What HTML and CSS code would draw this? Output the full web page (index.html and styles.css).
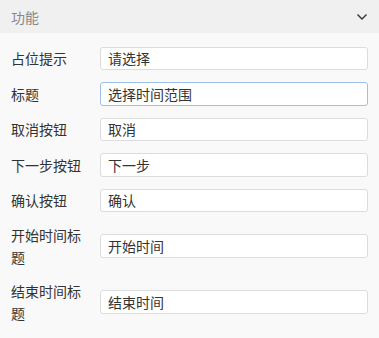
FILE: index.html
```html
<!DOCTYPE html>
<html lang="zh-CN">
<head>
<meta charset="utf-8">
<link rel="stylesheet" href="styles.css">
</head>
<body>
<div class="panel">
  <div class="panel-header">
    <span class="panel-title">功能</span>
    <svg class="chevron" width="12" height="8" viewBox="0 0 12 8"><path d="M1.5 1.5 L6 6 L10.5 1.5" fill="none" stroke="#333" stroke-width="1.4"/></svg>
  </div>
  <div class="panel-body">
    <div class="row"><label class="label">占位提示</label><input class="field" value="请选择"></div>
    <div class="row"><label class="label">标题</label><input class="field focused" value="选择时间范围"></div>
    <div class="row"><label class="label">取消按钮</label><input class="field" value="取消"></div>
    <div class="row"><label class="label">下一步按钮</label><input class="field" value="下一步"></div>
    <div class="row"><label class="label">确认按钮</label><input class="field" value="确认"></div>
    <div class="row"><label class="label">开始时间标题</label><input class="field" value="开始时间"></div>
    <div class="row"><label class="label">结束时间标题</label><input class="field" value="结束时间"></div>
  </div>
</div>
</body>
</html>
```
FILE: styles.css
```css
html, body {
  margin: 0;
  padding: 0;
  background: #f9f9f9;
  font-family: "Noto Sans CJK SC", "Noto Sans", sans-serif;
  font-size: 14px;
}
.panel {
  width: 379px;
}
.panel-header {
  height: 33px;
  background: #f0f0f0;
  display: flex;
  align-items: center;
  justify-content: space-between;
  padding: 0 11px 0 11px;
}
.panel-title {
  color: #888;
  font-size: 14px;
  line-height: 20px;
}
.chevron {
  display: block;
  margin-right: 0;
}
.panel-body {
  padding: 13.5px 11px 20px 11px;
  display: flex;
  flex-direction: column;
  gap: 12px;
}
.row {
  display: flex;
  align-items: center;
}
.label {
  width: 76px;
  margin-right: 13px;
  color: #333;
  line-height: 22px;
  font-size: 14px;
}
.field {
  box-sizing: border-box;
  width: 268px;
  height: 23.5px;
  border: 1px solid #dcdcdc;
  border-radius: 3px;
  background: #fff;
  padding: 0 7px;
  font-family: inherit;
  font-size: 14px;
  color: #333;
  outline: none;
  margin: 0;
}
.field.focused {
  border-color: #9dbfee;
}
```
